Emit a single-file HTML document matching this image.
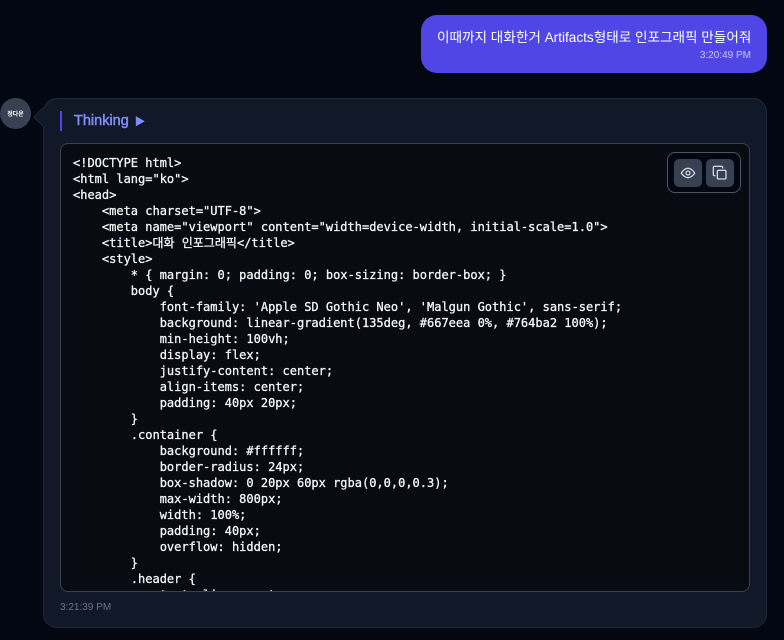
<!DOCTYPE html>
<html><head><meta charset="utf-8"><style>
*{margin:0;padding:0;box-sizing:border-box}
body{width:784px;height:640px;background:#030712;font-family:"Liberation Sans","Noto Sans CJK KR",sans-serif;position:relative;overflow:hidden}
.ub{position:absolute;left:421px;top:15px;width:346px;height:58px;background:#4f46e5;border-radius:16px;color:#fff}
.ub .t{position:absolute;left:16px;top:11px;font-size:13.6px;white-space:nowrap}
.ub .tm{position:absolute;right:16px;top:35px;font-size:10px;color:#c7c9f5}
.av{position:absolute;left:0;top:98px;width:31px;height:31px;border-radius:50%;background:#374151;color:#fff;font-size:6px;font-weight:bold;display:flex;align-items:center;justify-content:center}
.card{position:absolute;left:43px;top:98px;width:724px;height:530px;background:#111827;border:1px solid #1f2937;border-radius:14px}
.tail{position:absolute;left:36px;top:110px;width:14px;height:14px;background:#111827;transform:rotate(45deg);border-left:1px solid #1f2937;border-bottom:1px solid #1f2937}
.th{position:absolute;left:60px;top:111px;height:20px;border-left:2px solid #4f46e5;padding-left:12px;color:#818cf8;font-size:14.5px;line-height:20px;-webkit-text-stroke:0.5px #818cf8}
.th span{font-size:10px;margin-left:6px}
.code{position:absolute;left:60px;top:143px;width:690px;height:449px;background:#080b12;border:1px solid #374151;border-radius:8px;overflow:hidden}
pre{position:absolute;left:12px;top:11px;font-family:"DejaVu Sans Mono","Noto Sans CJK KR",monospace;font-size:12px;line-height:16px;color:#f3f4f6;-webkit-text-stroke:0.3px #f3f4f6}
.btns{position:absolute;left:667px;top:152px;width:74px;height:41px;border:1px solid #4b5563;border-radius:8px;background:#030712}
.b{position:absolute;top:6px;width:28px;height:28px;background:#374151;border-radius:5px;display:flex;align-items:center;justify-content:center}
.tm2{position:absolute;left:60px;top:602px;font-size:10px;color:#6b7280}
</style></head><body>
<div class="ub"><div class="t">이때까지 대화한거 Artifacts형태로 인포그래픽 만들어줘</div><div class="tm">3:20:49 PM</div></div>
<div class="card"></div><div class="tail"></div>
<div class="av">정다운</div>
<div class="th">Thinking<span>▶</span></div>
<div class="code"><pre>&lt;!DOCTYPE html&gt;
&lt;html lang="ko"&gt;
&lt;head&gt;
    &lt;meta charset="UTF-8"&gt;
    &lt;meta name="viewport" content="width=device-width, initial-scale=1.0"&gt;
    &lt;title&gt;대화 인포그래픽&lt;/title&gt;
    &lt;style&gt;
        * { margin: 0; padding: 0; box-sizing: border-box; }
        body {
            font-family: 'Apple SD Gothic Neo', 'Malgun Gothic', sans-serif;
            background: linear-gradient(135deg, #667eea 0%, #764ba2 100%);
            min-height: 100vh;
            display: flex;
            justify-content: center;
            align-items: center;
            padding: 40px 20px;
        }
        .container {
            background: #ffffff;
            border-radius: 24px;
            box-shadow: 0 20px 60px rgba(0,0,0,0.3);
            max-width: 800px;
            width: 100%;
            padding: 40px;
            overflow: hidden;
        }
        .header {
            text-align: center;</pre></div>
<div class="btns">
<div class="b" style="left:6px"><svg width="16" height="16" viewBox="0 0 24 24" fill="none" stroke="#d1d5db" stroke-width="2"><path d="M2 12s4-7 10-7 10 7 10 7-4 7-10 7S2 12 2 12z"/><circle cx="12" cy="12" r="3"/></svg></div>
<div class="b" style="left:38px"><svg width="16" height="16" viewBox="0 0 24 24" fill="none" stroke="#d1d5db" stroke-width="2"><rect x="8" y="8" width="13" height="13" rx="2"/><path d="M5 16H4a2 2 0 0 1-2-2V4a2 2 0 0 1 2-2h10a2 2 0 0 1 2 2v1"/></svg></div>
</div>
<div class="tm2">3:21:39 PM</div>
</body></html>
